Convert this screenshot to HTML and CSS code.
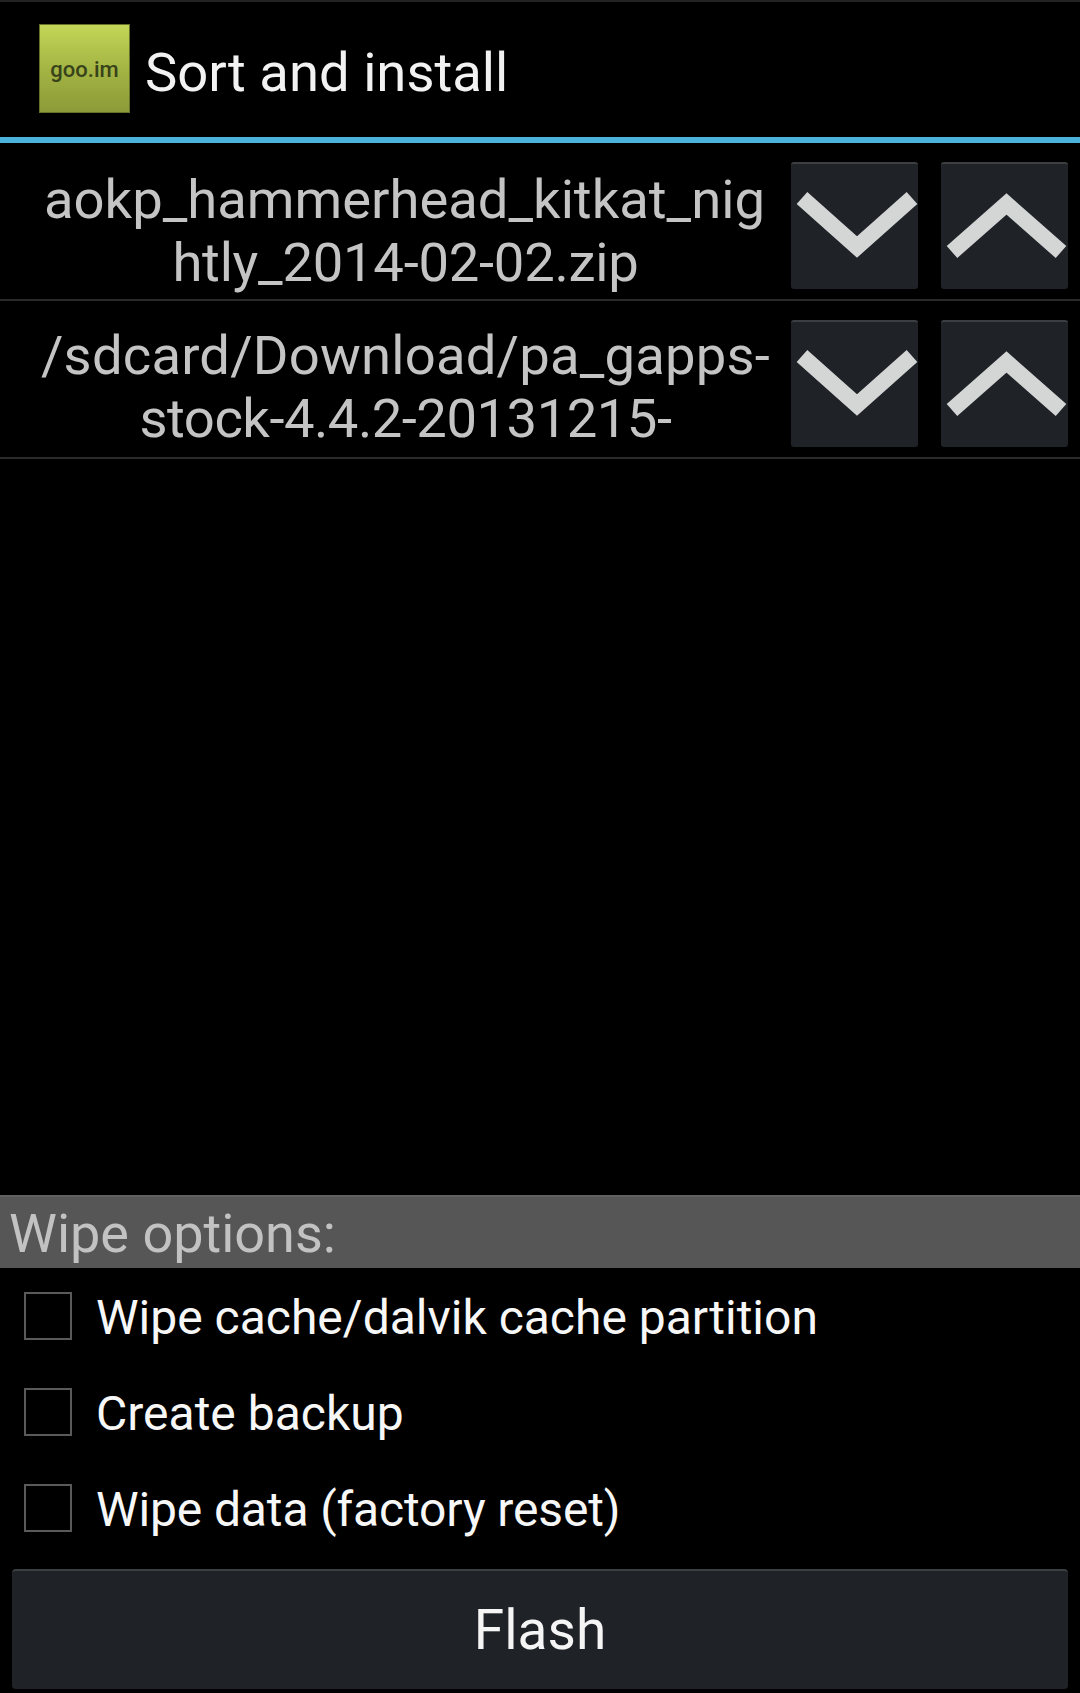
FILE: index.html
```html
<!DOCTYPE html>
<html lang="en">
<head>
<meta charset="utf-8">
<title>Sort and install</title>
<link rel="stylesheet" href="styles.css">
</head>
<body>
<div class="screen">
  <header class="header">
    <div class="logo"><span class="logo-text">goo.im</span></div>
    <h1 class="title">Sort and install</h1>
  </header>
  <main class="list">
    <div class="row row-first">
      <div class="name"><span class="line-a">aokp_hammerhead_kitkat_nig</span><br><span class="line-b">htly_2014-02-02.zip</span></div>
      <div class="btn"><svg class="chev" viewBox="0 0 125 125"><path d="M10 34 L65 83 L120 34"/></svg></div>
      <div class="btn"><svg class="chev" viewBox="0 0 125 125"><path d="M10 88 L64.5 40 L119 88"/></svg></div>
    </div>
    <div class="row">
      <div class="name"><span class="line-c">/sdcard/Download/pa_gapps-</span><br><span class="line-d">stock-4.4.2-20131215-</span></div>
      <div class="btn"><svg class="chev" viewBox="0 0 125 125"><path d="M10 34 L65 83 L120 34"/></svg></div>
      <div class="btn"><svg class="chev" viewBox="0 0 125 125"><path d="M10 88 L64.5 40 L119 88"/></svg></div>
    </div>
  </main>
  <section class="wipe">
    <div class="wipe-head">Wipe options:</div>
    <div class="opts">
      <div class="opt"><span class="box"></span><span>Wipe cache/dalvik cache partition</span></div>
      <div class="opt"><span class="box"></span><span>Create backup</span></div>
      <div class="opt"><span class="box"></span><span class="opt-tight">Wipe data (factory reset)</span></div>
    </div>
    <div class="flash">Flash</div>
  </section>
</div>
</body>
</html>
```

FILE: styles.css
```css
* { box-sizing: border-box; }
html, body { margin: 0; padding: 0; background: #000; }
.screen {
  width: 1080px;
  height: 1693px;
  display: flex;
  flex-direction: column;
  background: #000;
  font-family: Roboto, "Liberation Sans", sans-serif;
  overflow: hidden;
}
.header {
  height: 143px;
  flex: none;
  display: flex;
  align-items: center;
  gap: 15px;
  padding: 0 0 0 39px;
  border-top: 2px solid #222;
  border-bottom: 6px solid #4bb2dc;
}
.logo {
  width: 91px;
  height: 89px;
  flex: none;
  display: flex;
  align-items: center;
  justify-content: center;
  margin-bottom: 2px;
  background: linear-gradient(#c4d656, #a4b544 50%, #8c9b38);
  border: 1px solid #66722c;
}
.logo-text { font-size: 22px; font-weight: 500; color: #38431a; font-family: Roboto, sans-serif; padding-top: 1px; }
.title { margin: 0; padding-top: 8px; font-size: 54.4px; font-weight: 400; color: #f2f2f2; line-height: 1; }
.list { flex: 1; }
.row {
  display: flex;
  align-items: center;
  height: 158px;
  padding: 0 12px 0 20px;
  border-bottom: 2px solid #2a2a2a;
}
.name {
  width: 771px;
  text-align: center;
  font-size: 54.4px;
  line-height: 63px;
  color: #c4c4c4;
  padding-top: 16px;
  flex: none;
}
.row-first .name { padding-top: 20px; }
.line-a { position: relative; left: -1px; }
.line-b { letter-spacing: -0.25px; }
.line-c { letter-spacing: 0.2px; }
.line-d { letter-spacing: -0.5px; }
.btn {
  width: 127px;
  height: 127px;
  flex: none;
  margin-top: 8px;
  background: #1f2327;
  border-radius: 3px;
  border-top: 2px solid #3c3f42;
}
.btn + .btn { margin-left: 23px; }
.chev { display: block; width: 100%; height: 100%; }
.chev path { fill: none; stroke: #d4d6d6; stroke-width: 16; }
.wipe { flex: none; }
.wipe-head {
  height: 73px;
  background: #565656;
  color: #c2c2c2;
  font-size: 54px;
  line-height: 74px;
  padding-left: 9px;
  border-top: 2px solid #606060;
}
.opts { display: flex; flex-direction: column; gap: 48px; padding: 24px 0 37px; }
.opt {
  height: 48px;
  display: flex;
  align-items: flex-start;
  padding-left: 24px;
  gap: 24px;
  color: #f7f7f7;
  font-size: 48px;
  line-height: 52px;
}
.opt-tight { letter-spacing: -0.13px; }
.box {
  width: 48px;
  height: 48px;
  flex: none;
  border: 2px solid #5a5a5a;
  display: block;
}
.flash {
  margin: 0 12px 4px;
  height: 120px;
  background: #1f2327;
  border-radius: 4px;
  border-top: 2px solid #3c3f42;
  color: #f5f5f5;
  font-size: 55px;
  display: flex;
  align-items: center;
  justify-content: center;
}
```
